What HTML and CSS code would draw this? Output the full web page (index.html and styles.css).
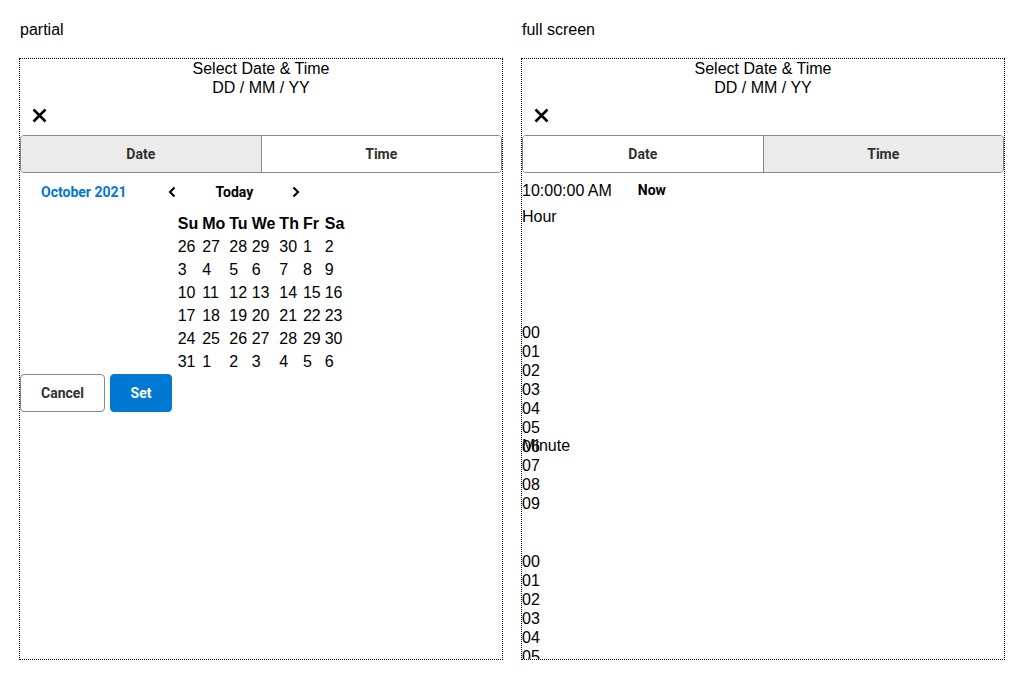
FILE: index.html
```html
<!DOCTYPE html>
<html>
<head>
<meta charset="utf-8">
<link rel="stylesheet" href="styles.css">
</head>
<body>
<div class="columns">
  <section class="column">
    <div class="label">partial</div>
    <div class="panel">
      <div class="title">Select Date &amp; Time<br>DD / MM / YY</div>
      <div class="close-row">
        <button class="close" aria-label="Close">
          <svg width="16" height="16" viewBox="0 0 16 16"><path d="M1.5 1.5 L13.5 13.5 M13.5 1.5 L1.5 13.5" stroke="#000" stroke-width="2.6" fill="none"/></svg>
        </button>
      </div>
      <div class="tabs">
        <button class="tab active">Date</button>
        <button class="tab">Time</button>
      </div>
      <div class="cal-header">
        <button class="month">October 2021</button>
        <button class="nav" aria-label="Previous">
          <svg width="16" height="16" viewBox="0 0 16 16"><path d="M10.5 3.5 L6 8 L10.5 12.5" stroke="#000" stroke-width="2.1" fill="none"/></svg>
        </button>
        <button class="today">Today</button>
        <button class="nav" aria-label="Next">
          <svg width="16" height="16" viewBox="0 0 16 16"><path d="M5.5 3.5 L10 8 L5.5 12.5" stroke="#000" stroke-width="2.1" fill="none"/></svg>
        </button>
      </div>
      <table class="days">
        <thead>
          <tr><th>Su</th><th>Mo</th><th>Tu</th><th>We</th><th>Th</th><th>Fr</th><th>Sa</th></tr>
        </thead>
        <tbody>
          <tr><td>26</td><td>27</td><td>28</td><td>29</td><td>30</td><td>1</td><td>2</td></tr>
          <tr><td>3</td><td>4</td><td>5</td><td>6</td><td>7</td><td>8</td><td>9</td></tr>
          <tr><td>10</td><td>11</td><td>12</td><td>13</td><td>14</td><td>15</td><td>16</td></tr>
          <tr><td>17</td><td>18</td><td>19</td><td>20</td><td>21</td><td>22</td><td>23</td></tr>
          <tr><td>24</td><td>25</td><td>26</td><td>27</td><td>28</td><td>29</td><td>30</td></tr>
          <tr><td>31</td><td>1</td><td>2</td><td>3</td><td>4</td><td>5</td><td>6</td></tr>
        </tbody>
      </table>
      <div class="actions">
        <button class="btn">Cancel</button>
        <button class="btn primary">Set</button>
      </div>
    </div>
  </section>
  <section class="column">
    <div class="label">full screen</div>
    <div class="panel">
      <div class="title">Select Date &amp; Time<br>DD / MM / YY</div>
      <div class="close-row">
        <button class="close" aria-label="Close">
          <svg width="16" height="16" viewBox="0 0 16 16"><path d="M1.5 1.5 L13.5 13.5 M13.5 1.5 L1.5 13.5" stroke="#000" stroke-width="2.6" fill="none"/></svg>
        </button>
      </div>
      <div class="tabs">
        <button class="tab">Date</button>
        <button class="tab active">Time</button>
      </div>
      <div class="time-row">
        <span class="time-value">10:00:00 AM</span>
        <button class="now">Now</button>
      </div>
      <div class="unit-label">Hour</div>
      <div class="wheel">
        <div>00</div><div>01</div><div>02</div><div>03</div><div>04</div>
        <div>05</div><div>06</div><div>07</div><div>08</div><div>09</div>
      </div>
      <div class="unit-label">Minute</div>
      <div class="wheel">
        <div>00</div><div>01</div><div>02</div><div>03</div><div>04</div>
        <div>05</div><div>06</div><div>07</div><div>08</div><div>09</div>
      </div>
    </div>
  </section>
</div>
</body>
</html>
```
FILE: styles.css
```css
html, body {
  margin: 0;
  padding: 0;
  height: 100%;
}
body {
  font-family: "Liberation Sans", Arial, sans-serif;
  font-size: 16px;
  line-height: 19px;
  color: #000;
  background: #fff;
  box-sizing: border-box;
  padding: 20px;
}
button {
  font-family: Roboto, "Liberation Sans", sans-serif;
  background: none;
  border: none;
  margin: 0;
  padding: 0;
  cursor: pointer;
}
.columns {
  display: flex;
  gap: 20px;
  height: 100%;
}
.column {
  flex: 1;
  min-width: 0;
  display: flex;
  flex-direction: column;
  gap: 20px;
}
.panel {
  flex: 1;
  min-height: 0;
  outline: 1px dotted #000;
  overflow: hidden;
  display: flex;
  flex-direction: column;
}
.title {
  text-align: center;
  flex: none;
}
.close-row {
  flex: none;
  height: 38px;
  display: flex;
  align-items: center;
}
.close {
  width: 40px;
  height: 38px;
  display: flex;
  align-items: center;
  justify-content: center;
}
.close svg {
  display: block;
}
.tabs {
  flex: none;
  display: flex;
  height: 38px;
  box-sizing: border-box;
  border: 1px solid #8a8886;
  border-radius: 4px;
  overflow: hidden;
}
.tab {
  flex: 1;
  font-size: 14px;
  font-weight: 700;
  color: #323130;
  background: #fff;
}
.tab + .tab {
  border-left: 1px solid #8a8886;
}
.tab.active {
  background: #ebebeb;
}
.cal-header {
  flex: none;
  height: 38px;
  display: flex;
  align-items: center;
}
.month {
  font-size: 14px;
  font-weight: 700;
  color: #0078d4;
  padding: 0 20px 0 21px;
  height: 38px;
}
.nav {
  width: 50px;
  height: 38px;
  display: flex;
  align-items: center;
  justify-content: center;
}
.nav svg {
  display: block;
}
.today {
  font-size: 14px;
  font-weight: 700;
  color: #000;
  height: 38px;
  padding: 0 18px 0 19px;
}
.days {
  flex: none;
  margin: 0 auto;
  font-size: 16px;
  text-align: left;
}
.days th {
  font-weight: 700;
  text-align: left;
}
.actions {
  flex: none;
  display: flex;
  gap: 5px;
}
.btn {
  height: 38px;
  box-sizing: border-box;
  padding: 0 20px;
  border: 1px solid #8a8886;
  border-radius: 4px;
  background: #fff;
  color: #323130;
  font-size: 14px;
  font-weight: 700;
}
.btn.primary {
  background: #0078d4;
  border-color: #0078d4;
  color: #fff;
  padding: 0 19.5px;
}
.time-row {
  flex: none;
  height: 34px;
  display: flex;
  align-items: center;
}
.now {
  font-size: 14px;
  font-weight: 700;
  color: #000;
  padding: 0 26px;
  height: 34px;
}
.unit-label {
  flex: none;
}
.wheel {
  flex: none;
  height: 210px;
  box-sizing: border-box;
  padding-top: 96.5px;
  line-height: 19px;
}
```
